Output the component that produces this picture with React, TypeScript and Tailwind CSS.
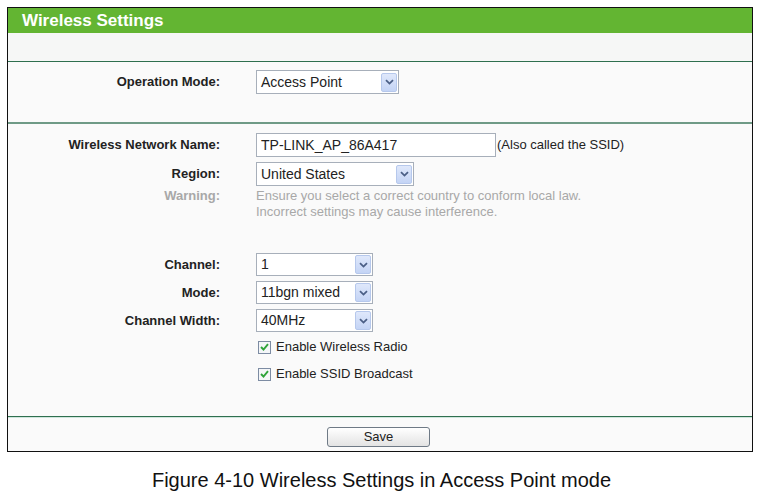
import React from 'react';

const FONT = { fontFamily: '"Liberation Sans", Arial, sans-serif' };

function Arrow() {
  return (
    <span className="flex h-[19px] w-[16px] items-center justify-center rounded-[2px] border border-[#b6c8ec] bg-[linear-gradient(#dfe8fb,#c4d4f5)]">
      <svg width="9" height="6" viewBox="0 0 9 6">
        <path d="M1 1.2 L4.5 4.6 L8 1.2" fill="none" stroke="#4b5f86" strokeWidth="1.8" />
      </svg>
    </span>
  );
}

function Select({ value, width, height = 24 }: { value: string; width: number; height?: number }) {
  return (
    <div
      className="flex items-center justify-between border border-[#a7afba] bg-white pl-[4px] pr-[1px] text-[14px] text-[#222]"
      style={{ width, height }}
    >
      <span>{value}</span>
      <Arrow />
    </div>
  );
}

function Label({ children, muted }: { children: React.ReactNode; muted?: boolean }) {
  return (
    <div
      className={[
        'w-[213px] shrink-0 pr-[1px] text-right text-[13px] font-bold',
        muted ? 'text-[#a8a8a8]' : 'text-[#222]',
      ].join(' ')}
    >
      {children}
    </div>
  );
}

function Checkbox({ label }: { label: string }) {
  return (
    <div className="flex h-[20px] items-center pl-[250px]">
      <span className="flex h-[13px] w-[13px] items-center justify-center border border-[#7d8ca3] bg-[#f4f6f8]">
        <svg width="9" height="8" viewBox="0 0 9 8">
          <path d="M1 4 L3.5 6.5 L8 1.2" fill="none" stroke="#2fa33a" strokeWidth="1.9" />
        </svg>
      </span>
      <span className="ml-[5px] text-[13px] text-[#222]">{label}</span>
    </div>
  );
}

export default function App() {
  return (
    <div className="h-[495px] w-[762px] bg-white pl-[7px] pt-[7px]" style={FONT}>
      <div className="w-[746px] border border-[#111] bg-[#fafafa]">
        {/* title bar */}
        <div className="flex h-[25px] items-center bg-[#63b532] pl-[14px] text-[17px] font-bold text-white">
          Wireless Settings
        </div>
        <div className="h-[28px] bg-[#f6f7f6]" />
        <div className="h-[1px] bg-[#2f6f4f]" />

        {/* operation mode */}
        <div className="h-[60px] pt-[8px]">
          <div className="flex items-center gap-[35px]">
            <Label>Operation Mode:</Label>
            <Select value="Access Point" width={143} />
          </div>
        </div>
        <div className="h-[2px] bg-[#6f9a86]" />

        {/* wireless settings */}
        <div className="h-[292px] pt-[9px]">
          <div className="flex h-[24px] items-center gap-[35px]">
            <Label>Wireless Network Name:</Label>
            <div className="flex h-[24px] w-[240px] items-center border border-[#a7afba] bg-white pl-[4px] text-[14px] text-[#222]">
              TP-LINK_AP_86A417
            </div>
            <span className="-ml-[34px] text-[13px] text-[#222]">(Also called the SSID)</span>
          </div>
          <div className="mt-[5px] flex h-[24px] items-center gap-[35px]">
            <Label>Region:</Label>
            <Select value="United States" width={158} />
          </div>
          <div className="mt-[2px] flex gap-[35px] leading-[16px]">
            <Label muted>Warning:</Label>
            <div className="text-[13px] text-[#a8a8a8]">
              Ensure you select a correct country to conform local law.
              <br />
              Incorrect settings may cause interference.
            </div>
          </div>
          <div className="mt-[33px] flex h-[23px] items-center gap-[35px]">
            <Label>Channel:</Label>
            <Select value="1" width={117} height={23} />
          </div>
          <div className="mt-[5px] flex h-[23px] items-center gap-[35px]">
            <Label>Mode:</Label>
            <Select value="11bgn mixed" width={117} height={23} />
          </div>
          <div className="mt-[5px] flex h-[23px] items-center gap-[35px]">
            <Label>Channel Width:</Label>
            <Select value="40MHz" width={117} height={23} />
          </div>
          <div className="mt-[5px]">
            <Checkbox label="Enable Wireless Radio" />
          </div>
          <div className="mt-[7px]">
            <Checkbox label="Enable SSID Broadcast" />
          </div>
        </div>
        <div className="h-[1px] bg-[#2f6f4f]" />
        <div className="h-[1px] bg-[#cfe6dc]" />

        {/* footer */}
        <div className="flex h-[33px] items-start justify-center pr-[3px] pt-[9px]">
          <button
            type="button"
            className="h-[20px] w-[103px] rounded-[3px] border border-[#6f7a86] bg-[linear-gradient(#ffffff,#e3e3e3)] text-[13px] leading-[18px] text-[#222]"
          >
            Save
          </button>
        </div>
      </div>
      <div className="mt-[13px] pr-[6px] text-center text-[20px] text-[#111]">
        Figure 4-10 Wireless Settings in Access Point mode
      </div>
    </div>
  );
}
